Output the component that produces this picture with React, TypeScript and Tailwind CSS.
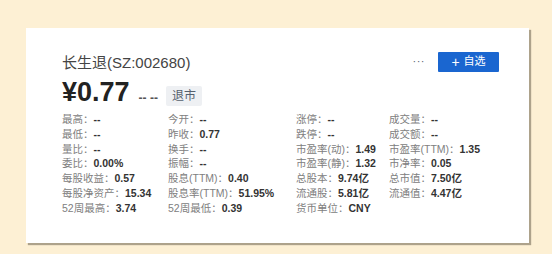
const rows: [string, string][][] = [
  [["最高", "--"], ["今开", "--"], ["涨停", "--"], ["成交量", "--"]],
  [["最低", "--"], ["昨收", "0.77"], ["跌停", "--"], ["成交额", "--"]],
  [["量比", "--"], ["换手", "--"], ["市盈率(动)", "1.49"], ["市盈率(TTM)", "1.35"]],
  [["委比", "0.00%"], ["振幅", "--"], ["市盈率(静)", "1.32"], ["市净率", "0.05"]],
  [["每股收益", "0.57"], ["股息(TTM)", "0.40"], ["总股本", "9.74亿"], ["总市值", "7.50亿"]],
  [["每股净资产", "15.34"], ["股息率(TTM)", "51.95%"], ["流通股", "5.81亿"], ["流通值", "4.47亿"]],
  [["52周最高", "3.74"], ["52周最低", "0.39"], ["货币单位", "CNY"]],
];

export default function App() {
  return (
    <div
      className="w-[552px] h-[254px] bg-[#fdf0d4] pt-[28px] pl-[26px] overflow-hidden"
      style={{ fontFamily: '"Liberation Sans", "Noto Sans CJK SC", sans-serif' }}
    >
      <div className="w-[503px] h-[215px] bg-white shadow-[2px_2px_1px_rgba(120,110,90,0.6)] pl-[36px] pr-[30px] pt-[25px]">
        {/* Header */}
        <div className="flex items-center justify-between">
          <div className="text-[15px] leading-[20px] text-[#444]">长生退(SZ:002680)</div>
          <div className="flex items-center gap-[13px] mt-[-3px]">
            <span className="text-[11px] text-[#5a6474] tracking-[0.5px]">···</span>
            <button className="w-[61px] h-[20px] bg-[#1a66d0] text-white text-[11px] flex items-center justify-center gap-[4px] rounded-[1px]">
              <span className="text-[14px] leading-none font-light">+</span>
              <span>自选</span>
            </button>
          </div>
        </div>

        {/* Price */}
        <div className="flex items-end mt-[6px] h-[26px]">
          <span className="text-[27px] leading-[26px] font-bold text-[#222]">¥0.77</span>
          <span className="ml-[9px] text-[12px] font-bold text-[#555] leading-[14px]">-- --</span>
          <span className="ml-[8px] mb-[-1px] h-[20px] px-[6px] bg-[#eef0f3] text-[#55606e] text-[12px] leading-[20px] rounded-[2px]">退市</span>
        </div>

        {/* Data grid */}
        <div className="mt-[7px] grid grid-cols-[106px_128px_93px_auto] text-[10.5px] leading-[14.75px]">
          {rows.map((row, i) =>
            [0, 1, 2, 3].map((j) => (
              <div key={`${i}-${j}`} className="whitespace-nowrap">
                {row[j] && (
                  <>
                    <span className="text-[#808080]">{row[j][0]}：</span>
                    <span className="font-bold text-[#333]">{row[j][1]}</span>
                  </>
                )}
              </div>
            ))
          )}
        </div>
      </div>
    </div>
  );
}
